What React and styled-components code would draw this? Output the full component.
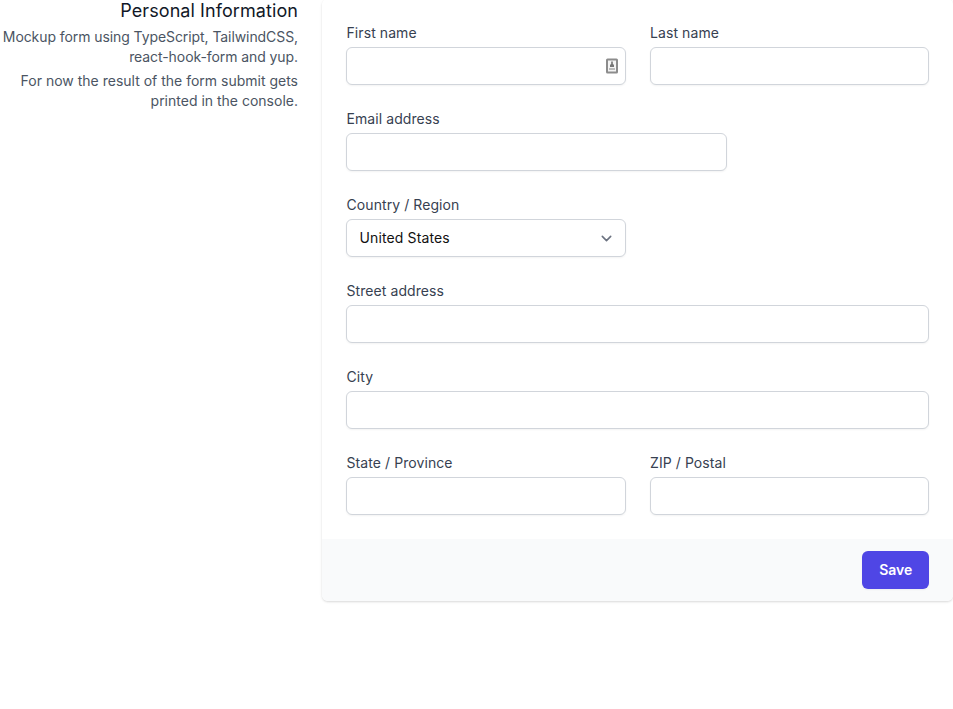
import React from "react";
import styled, { createGlobalStyle } from "styled-components";

const GlobalStyle = createGlobalStyle`
  *, *::before, *::after { box-sizing: border-box; }
  body { margin: 0; background: #fff; font-family: Inter, "Liberation Sans", sans-serif; color: #111827; line-height: 1.5; }
  h3, p { margin: 0; }
`;

const Page = styled.main`
  display: grid;
  grid-template-columns: 298px 631px;
  column-gap: 24px;
  align-items: start;
  min-height: 100vh;
`;

const Intro = styled.header`
  text-align: right;
`;

const Title = styled.h3`
  font-size: 18px;
  font-weight: 400;
  line-height: 24px;
  letter-spacing: 0.08px;
  margin-top: -1px;
`;

const Description = styled.p`
  margin-top: 4px;
  font-size: 14px;
  line-height: 20px;
  color: #4b5563;
  letter-spacing: ${(p) => p.$tracking || 0}px;
`;

const Card = styled.form`
  margin-top: -1px;
  border-radius: 6px;
  box-shadow: 0 1px 3px 0 rgba(0, 0, 0, 0.1), 0 1px 2px 0 rgba(0, 0, 0, 0.06);
`;

const Fields = styled.div`
  display: grid;
  grid-template-columns: repeat(6, minmax(0, 1fr));
  gap: 24px;
  padding: 24px;
  border-radius: 6px 6px 0 0;
  background: #fff;
`;

const Field = styled.div`
  grid-column: ${(p) => (p.$start ? `${p.$start} / ` : "")}span ${(p) => p.$span};
`;

const Label = styled.label`
  display: block;
  font-size: 14px;
  font-weight: 400;
  line-height: 20px;
  letter-spacing: 0.08px;
  padding-left: 0.5px;
  color: #374151;
`;

const Control = styled.div`
  display: flex;
  position: relative;
  margin-top: 4px;
`;

const Input = styled.input`
  width: 100%;
  height: 38px;
  padding: 8px 12px;
  border: 1px solid #d1d5db;
  border-radius: 6px;
  background: #fff;
  font: 400 14px/20px Inter, sans-serif;
  box-shadow: 0 1px 2px 0 rgba(0, 0, 0, 0.05);
`;

const Select = styled.select`
  appearance: none;
  width: 100%;
  height: 38px;
  padding: 8px 12.5px;
  border: 1px solid #d1d5db;
  border-radius: 6px;
  background: #fff;
  color: #111;
  font: 400 14px/20px Inter, sans-serif;
  letter-spacing: 0.12px;
  box-shadow: 0 1px 2px 0 rgba(0, 0, 0, 0.05);
`;

const Chevron = styled.svg`
  position: absolute;
  right: 9px;
  top: 9px;
  width: 21px;
  height: 21px;
  pointer-events: none;
`;

const Contact = styled.svg`
  position: absolute;
  right: 8px;
  top: 11px;
  width: 12px;
  height: 16px;
`;

const Footer = styled.footer`
  display: flex;
  justify-content: flex-end;
  padding: 12px 24px;
  border-radius: 0 0 6px 6px;
  background: #f9fafb;
`;

const Save = styled.button`
  height: 38px;
  width: 67px;
  padding: 0 0 0 0.5px;
  border: 1px solid transparent;
  border-radius: 6px;
  background: #4f46e5;
  color: #fff;
  font: 600 14px/20px Inter, sans-serif;
  box-shadow: 0 1px 2px 0 rgba(0, 0, 0, 0.05);
`;

function TextField({ id, label, span, children }) {
  return (
    <Field $span={span}>
      <Label htmlFor={id}>{label}</Label>
      <Control>
        <Input id={id} type="text" />
        {children}
      </Control>
    </Field>
  );
}

export default function App() {
  return (
    <>
      <GlobalStyle />
      <Page>
        <Intro>
          <Title>Personal Information</Title>
          <Description $tracking={-0.08}>Mockup form using TypeScript, TailwindCSS, react-hook-form and yup.</Description>
          <Description>For now the result of the form submit gets printed in the console.</Description>
        </Intro>
        <Card>
          <Fields>
            <TextField id="first" label="First name" span={3}>
              <Contact viewBox="0 0 12 16" fill="none">
                <rect x="1" y="1.5" width="10" height="13" rx="0.5" fill="#f4f4f4" stroke="#8c8c8c" strokeWidth="2" />
                <path d="M5 3.5h2v2.5H5z" fill="#8a8a8a" />
                <path d="M4 9V7l1-1h2l1 1v2z" fill="#777" />
                <path d="M3 10h6v2H3z" fill="#bbb" />
              </Contact>
            </TextField>
            <TextField id="last" label="Last name" span={3} />
            <TextField id="email" label="Email address" span={4} />
            <Field $span={3} $start={1}>
              <Label htmlFor="country">Country / Region</Label>
              <Control>
                <Select id="country" defaultValue="United States">
                  <option>United States</option>
                </Select>
                <Chevron viewBox="0 0 20 20" fill="none">
                  <path d="M6 8l4 4 4-4" stroke="#6b7280" strokeWidth="1.5" strokeLinecap="round" strokeLinejoin="round" />
                </Chevron>
              </Control>
            </Field>
            <TextField id="street" label="Street address" span={6} />
            <TextField id="city" label="City" span={6} />
            <TextField id="state" label="State / Province" span={3} />
            <TextField id="zip" label="ZIP / Postal" span={3} />
          </Fields>
          <Footer>
            <Save type="button">Save</Save>
          </Footer>
        </Card>
      </Page>
    </>
  );
}
